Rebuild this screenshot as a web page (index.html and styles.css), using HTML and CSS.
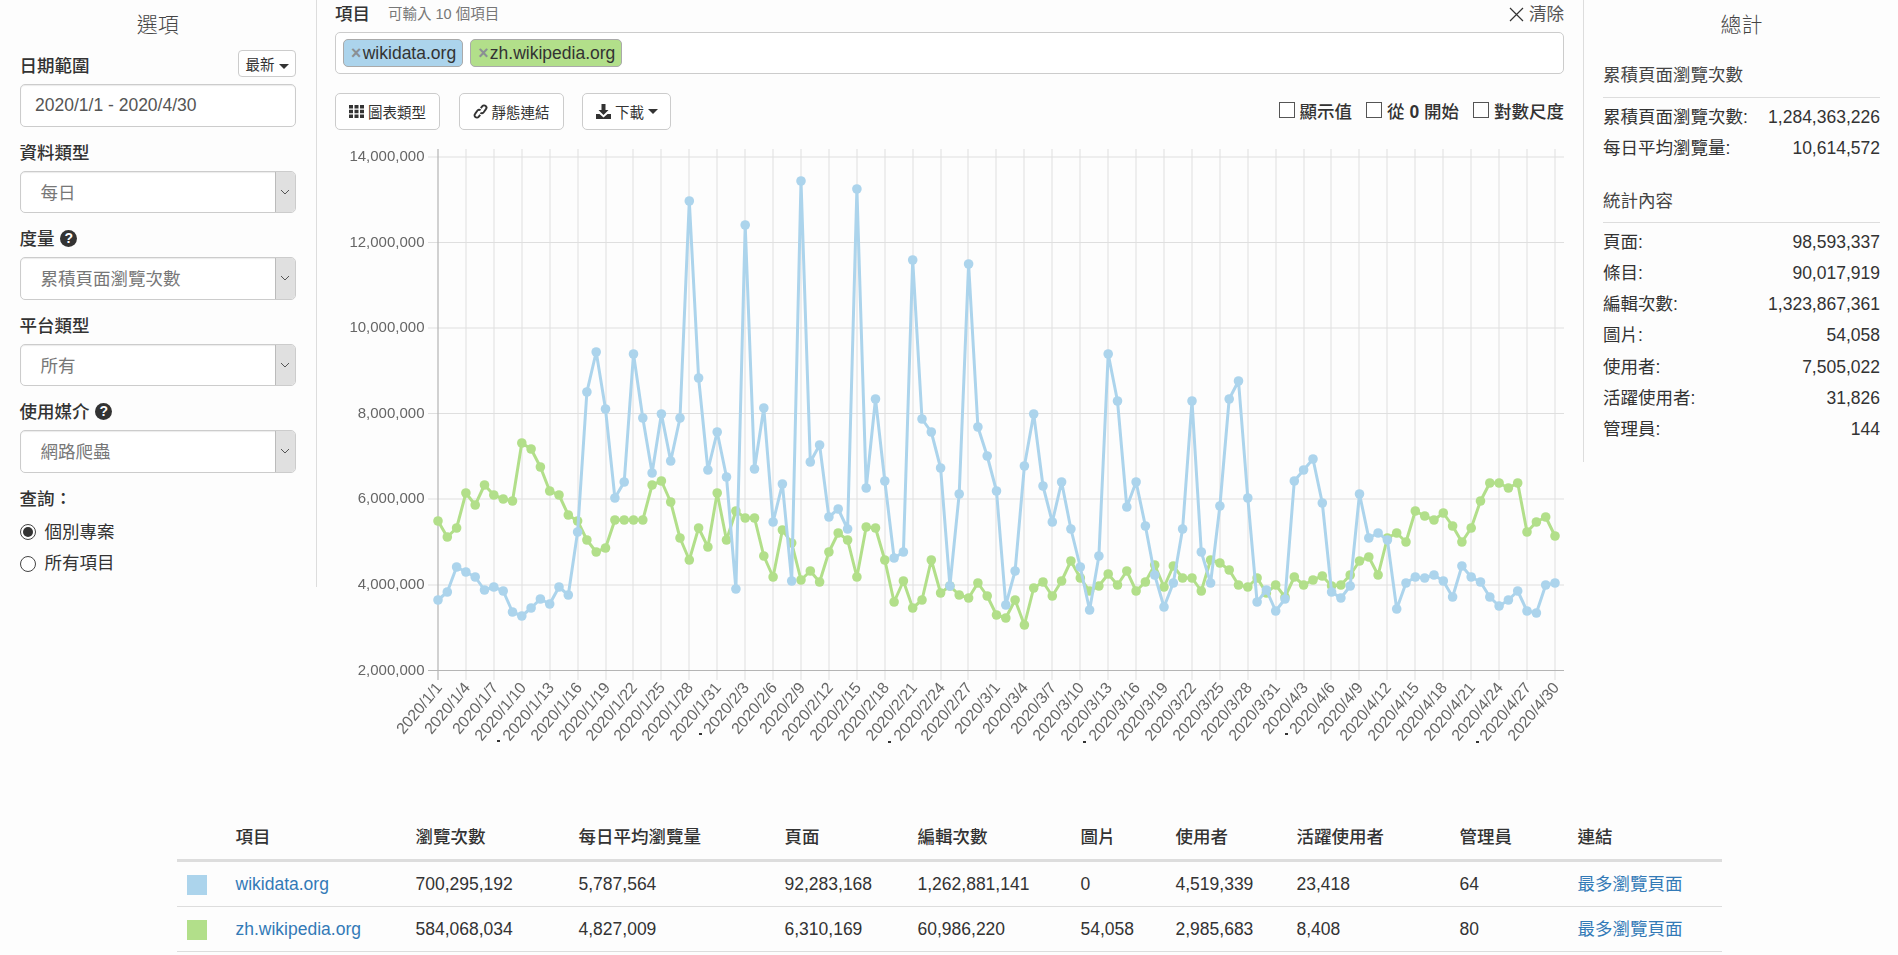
FILE: index.html
```html
<!DOCTYPE html>
<html lang="zh-Hant">
<head>
<meta charset="utf-8">
<title>Siteviews</title>
<link rel="stylesheet" href="styles.css">
</head>
<body>
<main class="main">
  <aside class="options">
    <h2 class="panel-title">選項</h2>
    <div class="date-row">
      <label class="field-label">日期範圍</label>
      <button class="latest">最新<span class="caret"></span></button>
    </div>
    <div class="input">2020/1/1 - 2020/4/30</div>
    <label class="field-label">資料類型</label>
    <div class="select"><span class="select-value">每日</span><span class="select-arrow"><svg class="chev" viewBox="0 0 10 6"><path d="M1 1l4 4 4-4"/></svg></span></div>
    <label class="field-label">度量 <span class="help">?</span></label>
    <div class="select"><span class="select-value">累積頁面瀏覽次數</span><span class="select-arrow"><svg class="chev" viewBox="0 0 10 6"><path d="M1 1l4 4 4-4"/></svg></span></div>
    <label class="field-label">平台類型</label>
    <div class="select"><span class="select-value">所有</span><span class="select-arrow"><svg class="chev" viewBox="0 0 10 6"><path d="M1 1l4 4 4-4"/></svg></span></div>
    <label class="field-label">使用媒介 <span class="help">?</span></label>
    <div class="select"><span class="select-value">網路爬蟲</span><span class="select-arrow"><svg class="chev" viewBox="0 0 10 6"><path d="M1 1l4 4 4-4"/></svg></span></div>
    <label class="field-label">查詢：</label>
    <div class="radios">
      <div class="radio-row"><span class="radio radio-on"></span>個別專案</div>
      <div class="radio-row"><span class="radio"></span>所有項目</div>
    </div>
  </aside>

  <section class="center">
    <div class="items-head">
      <strong class="items-title">項目</strong>
      <span class="items-hint">可輸入 10 個項目</span>
      <span class="clear"><svg class="clear-x" viewBox="0 0 15 15"><path d="M1 1l13 13M14 1L1 14"/></svg>清除</span>
    </div>
    <div class="tagbox">
      <span class="tag tag-blue"><span class="tag-x">×</span>wikidata.org</span>
      <span class="tag tag-green"><span class="tag-x">×</span>zh.wikipedia.org</span>
    </div>
    <div class="toolbar">
      <button class="btn"><svg class="icon" viewBox="0 0 15 15"><path d="M0 1h4v3.500H0zM5.500 1h4v3.500h-4zM11 1h4v3.500h-4zM0 5.750h4v3.500H0zM5.500 5.750h4v3.500h-4zM11 5.750h4v3.500h-4zM0 10.500h4V14H0zM5.500 10.500h4V14h-4zM11 10.500h4V14h-4z"/></svg>圖表類型</button>
      <button class="btn"><svg class="icon icon-link" viewBox="0 0 15 15"><path d="M7.200 10.800L5.600 12.800a2.300 2.300 0 0 1-3.500-3L4.300 6.700a2.300 2.300 0 0 1 3.300-.4M7.800 4.200L9.400 2.200a2.300 2.300 0 0 1 3.500 3L10.700 8.300a2.300 2.300 0 0 1-3.300.4"/></svg>靜態連結</button>
      <button class="btn btn-download"><svg class="icon" viewBox="0 0 15 15"><path d="M5.500 0h4v6h3L7.500 11 2.500 6h3zM0 10h3.500l4 3.500 4-3.500H15v5H0z"/></svg>下載<span class="caret"></span></button>
      <div class="checks">
        <span class="check"><span class="checkbox"></span>顯示值</span>
        <span class="check"><span class="checkbox"></span>從 <b class="zero">0</b> 開始</span>
        <span class="check"><span class="checkbox"></span>對數尺度</span>
      </div>
    </div>

    <svg class="chart" width="1235" height="620" viewBox="335 140 1235 620">
      <defs>
        <marker id="dot-blue" viewBox="-6 -6 12 12" markerWidth="12" markerHeight="12" markerUnits="userSpaceOnUse"><circle class="dot-blue" r="4.800"/></marker>
        <marker id="dot-green" viewBox="-6 -6 12 12" markerWidth="12" markerHeight="12" markerUnits="userSpaceOnUse"><circle class="dot-green" r="4.800"/></marker>
      </defs>
      <path class="grid" d="M466 149V680M494 149V680M522 149V680M550 149V680M578 149V680M606 149V680M633 149V680M661 149V680M689 149V680M717 149V680M745 149V680M773 149V680M801 149V680M829 149V680M857 149V680M885 149V680M913 149V680M941 149V680M968 149V680M996 149V680M1024 149V680M1052 149V680M1080 149V680M1108 149V680M1136 149V680M1164 149V680M1192 149V680M1220 149V680M1248 149V680M1276 149V680M1304 149V680M1331 149V680M1359 149V680M1387 149V680M1415 149V680M1443 149V680M1471 149V680M1499 149V680M1527 149V680M1555 149V680"/>
      <path class="grid" d="M428 157H1564M428 242.500H1564M428 328H1564M428 413.500H1564M428 499H1564M428 585H1564"/>
      <path class="axis" d="M438 149V680M428 670.500H1564"/>
      <g class="y-labels">
        <text x="424.500" y="161">14,000,000</text>
        <text x="424.500" y="246.500">12,000,000</text>
        <text x="424.500" y="332">10,000,000</text>
        <text x="424.500" y="417.500">8,000,000</text>
        <text x="424.500" y="503">6,000,000</text>
        <text x="424.500" y="589">4,000,000</text>
        <text x="424.500" y="674.500">2,000,000</text>
      </g>
      <polyline class="line-green" points="438,521 447.300,537 456.600,528 465.900,493 475.200,505 484.500,485 493.800,495 503.200,499 512.500,501 521.800,443 531.100,449 540.400,467 549.700,491 559,495 568.300,515 577.600,521 586.900,540 596.200,552 605.500,548 614.900,520 624.200,520 633.500,520 642.800,520 652.100,485 661.400,481 670.700,502 680,538 689.300,560 698.600,528 707.900,547 717.200,493 726.500,540 735.900,511 745.200,518 754.500,518 763.800,556 773.100,577 782.400,530 791.700,543 801,580 810.300,571 819.600,582 828.900,552 838.200,533 847.600,540 856.900,577 866.200,527 875.500,528 884.800,560 894.100,602 903.400,581 912.700,608 922,600 931.300,560 940.600,593 949.900,586 959.200,595 968.600,598 977.900,583 987.200,596 996.500,615 1005.800,618 1015.100,600 1024.400,625 1033.700,588 1043,582 1052.300,596 1061.600,581 1070.900,561 1080.300,578 1089.600,591 1098.900,586 1108.200,574 1117.500,585 1126.800,571 1136.100,591 1145.400,582 1154.700,565 1164,587 1173.300,566 1182.600,578 1192,578 1201.300,591 1210.600,560 1219.900,563 1229.200,570 1238.500,585 1247.800,587 1257.100,578 1266.400,593 1275.700,585 1285,597 1294.300,577 1303.600,585 1313,580 1322.300,576 1331.600,586 1340.900,585 1350.200,575 1359.500,561 1368.800,557 1378.100,575 1387.400,538 1396.700,533 1406,542 1415.300,511 1424.700,516 1434,520 1443.300,513 1452.600,526 1461.900,542 1471.200,528 1480.500,501 1489.800,483 1499.100,483 1508.400,488 1517.700,483 1527,532 1536.400,522 1545.700,517 1555,536"/>
      <polyline class="line-blue" points="438,600 447.300,592 456.600,567 465.900,572 475.200,577 484.500,590 493.800,587 503.200,591 512.500,612 521.800,616 531.100,608 540.400,599 549.700,604 559,587 568.300,595 577.600,532 586.900,392 596.200,352 605.500,409 614.900,498 624.200,482 633.500,354 642.800,418 652.100,473 661.400,414 670.700,461 680,418 689.300,201 698.600,378 707.900,470 717.200,432 726.500,477 735.900,589 745.200,225 754.500,469 763.800,408 773.100,522 782.400,484 791.700,581 801,181 810.300,462 819.600,445 828.900,517 838.200,509 847.600,529 856.900,189 866.200,488 875.500,399 884.800,481 894.100,558 903.400,552 912.700,260 922,419 931.300,432 940.600,468 949.900,586 959.200,494 968.600,264 977.900,427 987.200,456 996.500,491 1005.800,605 1015.100,571 1024.400,466 1033.700,414 1043,486 1052.300,522 1061.600,482 1070.900,529 1080.300,567 1089.600,610 1098.900,556 1108.200,354 1117.500,401 1126.800,507 1136.100,482 1145.400,526 1154.700,575 1164,607 1173.300,583 1182.600,529 1192,401 1201.300,552 1210.600,583 1219.900,506 1229.200,399 1238.500,381 1247.800,498 1257.100,602 1266.400,590 1275.700,611 1285,599 1294.300,481 1303.600,470 1313,459 1322.300,503 1331.600,592 1340.900,598 1350.200,586 1359.500,494 1368.800,538 1378.100,533 1387.400,540 1396.700,609 1406,583 1415.300,577 1424.700,578 1434,575 1443.300,581 1452.600,597 1461.900,566 1471.200,577 1480.500,582 1489.800,597 1499.100,606 1508.400,600 1517.700,591 1527,611 1536.400,613 1545.700,585 1555,583"/>
      <g class="x-labels">
        <text x="443" y="688" transform="rotate(-50 443 688)">2020/1/1</text>
        <text x="471" y="688" transform="rotate(-50 471 688)">2020/1/4</text>
        <text x="499" y="688" transform="rotate(-50 499 688)">2020/1/7</text>
        <text x="527" y="688" transform="rotate(-50 527 688)">2020/1/10</text>
        <text x="555" y="688" transform="rotate(-50 555 688)">2020/1/13</text>
        <text x="583" y="688" transform="rotate(-50 583 688)">2020/1/16</text>
        <text x="611" y="688" transform="rotate(-50 611 688)">2020/1/19</text>
        <text x="638" y="688" transform="rotate(-50 638 688)">2020/1/22</text>
        <text x="666" y="688" transform="rotate(-50 666 688)">2020/1/25</text>
        <text x="694" y="688" transform="rotate(-50 694 688)">2020/1/28</text>
        <text x="722" y="688" transform="rotate(-50 722 688)">2020/1/31</text>
        <text x="750" y="688" transform="rotate(-50 750 688)">2020/2/3</text>
        <text x="778" y="688" transform="rotate(-50 778 688)">2020/2/6</text>
        <text x="806" y="688" transform="rotate(-50 806 688)">2020/2/9</text>
        <text x="834" y="688" transform="rotate(-50 834 688)">2020/2/12</text>
        <text x="862" y="688" transform="rotate(-50 862 688)">2020/2/15</text>
        <text x="890" y="688" transform="rotate(-50 890 688)">2020/2/18</text>
        <text x="918" y="688" transform="rotate(-50 918 688)">2020/2/21</text>
        <text x="946" y="688" transform="rotate(-50 946 688)">2020/2/24</text>
        <text x="973" y="688" transform="rotate(-50 973 688)">2020/2/27</text>
        <text x="1001" y="688" transform="rotate(-50 1001 688)">2020/3/1</text>
        <text x="1029" y="688" transform="rotate(-50 1029 688)">2020/3/4</text>
        <text x="1057" y="688" transform="rotate(-50 1057 688)">2020/3/7</text>
        <text x="1085" y="688" transform="rotate(-50 1085 688)">2020/3/10</text>
        <text x="1113" y="688" transform="rotate(-50 1113 688)">2020/3/13</text>
        <text x="1141" y="688" transform="rotate(-50 1141 688)">2020/3/16</text>
        <text x="1169" y="688" transform="rotate(-50 1169 688)">2020/3/19</text>
        <text x="1197" y="688" transform="rotate(-50 1197 688)">2020/3/22</text>
        <text x="1225" y="688" transform="rotate(-50 1225 688)">2020/3/25</text>
        <text x="1253" y="688" transform="rotate(-50 1253 688)">2020/3/28</text>
        <text x="1281" y="688" transform="rotate(-50 1281 688)">2020/3/31</text>
        <text x="1309" y="688" transform="rotate(-50 1309 688)">2020/4/3</text>
        <text x="1336" y="688" transform="rotate(-50 1336 688)">2020/4/6</text>
        <text x="1364" y="688" transform="rotate(-50 1364 688)">2020/4/9</text>
        <text x="1392" y="688" transform="rotate(-50 1392 688)">2020/4/12</text>
        <text x="1420" y="688" transform="rotate(-50 1420 688)">2020/4/15</text>
        <text x="1448" y="688" transform="rotate(-50 1448 688)">2020/4/18</text>
        <text x="1476" y="688" transform="rotate(-50 1476 688)">2020/4/21</text>
        <text x="1504" y="688" transform="rotate(-50 1504 688)">2020/4/24</text>
        <text x="1532" y="688" transform="rotate(-50 1532 688)">2020/4/27</text>
        <text x="1560" y="688" transform="rotate(-50 1560 688)">2020/4/30</text>
      </g>
      <path class="specks" d="M497 740h3v2h-3zM699 733h3v2h-3zM888 741h3v2h-3zM1083 741h3v2h-3zM1285 733h3v2h-3zM1476 741h3v2h-3z"/>
    </svg>
  </section>

  <aside class="totals">
    <h2 class="panel-title">總計</h2>
    <div class="section-title">累積頁面瀏覽次數</div>
    <div class="stat-list">
      <div class="stat"><span>累積頁面瀏覽次數:</span><span>1,284,363,226</span></div>
      <div class="stat"><span>每日平均瀏覽量:</span><span>10,614,572</span></div>
    </div>
    <div class="section-title section-second">統計內容</div>
    <div class="stat-list">
      <div class="stat"><span>頁面:</span><span>98,593,337</span></div>
      <div class="stat"><span>條目:</span><span>90,017,919</span></div>
      <div class="stat"><span>編輯次數:</span><span>1,323,867,361</span></div>
      <div class="stat"><span>圖片:</span><span>54,058</span></div>
      <div class="stat"><span>使用者:</span><span>7,505,022</span></div>
      <div class="stat"><span>活躍使用者:</span><span>31,826</span></div>
      <div class="stat"><span>管理員:</span><span>144</span></div>
    </div>
  </aside>
</main>

<table class="table">
  <colgroup>
    <col class="c-swatch"><col class="c-item"><col class="c-views"><col class="c-avg"><col class="c-pages"><col class="c-edits"><col class="c-images"><col class="c-users"><col class="c-active"><col class="c-admins"><col class="c-links">
  </colgroup>
  <thead>
    <tr><th></th><th>項目</th><th>瀏覽次數</th><th>每日平均瀏覽量</th><th>頁面</th><th>編輯次數</th><th>圖片</th><th>使用者</th><th>活躍使用者</th><th>管理員</th><th>連結</th></tr>
  </thead>
  <tbody>
    <tr><td><span class="swatch swatch-blue"></span></td><td><a href="#">wikidata.org</a></td><td>700,295,192</td><td>5,787,564</td><td>92,283,168</td><td>1,262,881,141</td><td>0</td><td>4,519,339</td><td>23,418</td><td>64</td><td><a href="#">最多瀏覽頁面</a></td></tr>
    <tr><td><span class="swatch swatch-green"></span></td><td><a href="#">zh.wikipedia.org</a></td><td>584,068,034</td><td>4,827,009</td><td>6,310,169</td><td>60,986,220</td><td>54,058</td><td>2,985,683</td><td>8,408</td><td>80</td><td><a href="#">最多瀏覽頁面</a></td></tr>
  </tbody>
</table>
</body>
</html>
```

FILE: styles.css
```css
* { box-sizing: border-box; }
html, body { margin: 0; padding: 0; background: #fdfdfd; }
body {
  font-family: "Liberation Sans", "Noto Sans CJK TC", sans-serif;
  font-size: 17.5px;
  line-height: 25px;
  color: #333;
  overflow: hidden;
}
button { font-family: inherit; color: #333; cursor: pointer; }

.main { display: flex; align-items: flex-start; }

.options {
  width: 317px;
  height: 587px;
  flex: none;
  padding: 0 20px 0 19.5px;
  border-right: 1px solid #ddd;
}
.panel-title {
  margin: 0;
  height: 50px;
  font-size: 21px;
  font-weight: 300;
  line-height: 50px;
  text-align: center;
  color: #444;
}
.date-row { display: flex; justify-content: space-between; align-items: flex-start; height: 29px; margin-bottom: 5px; }
.date-row .field-label { margin: 4px 0 0; }
.field-label { display: block; margin-bottom: 5px; font-weight: 500; }
.latest {
  height: 27px;
  width: 58px;
  padding: 0;
  font-size: 14.5px;
  background: #fff;
  border: 1px solid #ccc;
  border-radius: 4px;
}
.caret {
  display: inline-block;
  margin-left: 4px;
  vertical-align: middle;
  border-top: 5px solid #333;
  border-left: 5px solid transparent;
  border-right: 5px solid transparent;
}
.input, .select {
  height: 42.5px;
  margin-bottom: 14px;
  background: #fff;
  border: 1px solid #ccc;
  border-radius: 5px;
  box-shadow: inset 0 1px 1px rgba(0,0,0,.08);
}
.input { padding: 8px 14.5px; color: #555; }
.select { display: flex; justify-content: space-between; color: #777; }
.select-value { padding: 9px 0 0 20px; }
.select-arrow {
  display: flex;
  align-items: center;
  justify-content: center;
  width: 20.5px;
  background: #e0e0e0;
  border-left: 1px solid #bbb;
  border-radius: 0 4px 4px 0;
}
.chev { width: 10px; height: 6px; fill: none; stroke: #555; stroke-width: 1; }
.help {
  display: inline-block;
  width: 17px;
  height: 17px;
  margin-left: 1px;
  border-radius: 50%;
  background: #333;
  color: #fdfdfd;
  font-size: 14px;
  font-weight: 700;
  line-height: 17px;
  text-align: center;
  vertical-align: 2px;
}
.radios { margin-top: 3px; }
.radio-row { display: flex; align-items: center; height: 31.5px; }
.radio {
  display: flex;
  align-items: center;
  justify-content: center;
  width: 16px;
  height: 16px;
  margin-right: 9px;
  background: #fff;
  border: 1px solid #444;
  border-radius: 50%;
}
.radio-on::after { content: ""; width: 10px; height: 10px; border-radius: 50%; background: #333; }

.center { flex: 1; min-width: 0; margin: 0 19px 0 18px; }
.items-head { display: flex; align-items: center; height: 28px; margin-bottom: 4px; }
.items-title { font-weight: 500; }
.items-hint { margin-left: 18px; font-size: 14.5px; color: #777; }
.clear { display: flex; align-items: center; margin-left: auto; color: #555; }
.clear-x { width: 15px; height: 15px; margin-right: 5px; fill: none; stroke: #333; stroke-width: 1.2; }
.tagbox {
  display: flex;
  gap: 7px;
  align-items: center;
  height: 42px;
  padding: 0 7px;
  background: #fff;
  border: 1px solid #ccc;
  border-radius: 5px;
}
.tag {
  height: 28px;
  padding: 0 6px 0 7px;
  line-height: 26px;
  border: 1px solid #aaa;
  border-radius: 5px;
}
.tag-blue { background: #acd4ec; }
.tag-green { background: #b2df8a; }
.tag-x { margin-right: 1.5px; color: #8a8f94; font-weight: 700; }

.toolbar { display: flex; align-items: flex-start; gap: 18.5px; height: 37px; margin-top: 19px; }
.btn {
  display: flex;
  align-items: center;
  height: 37px;
  padding: 0 13px;
  font-size: 14.5px;
  background: #fff;
  border: 1px solid #ccc;
  border-radius: 5px;
}
.btn-download { padding-right: 12px; }
.icon { width: 15px; height: 15px; margin-right: 4px; fill: #333; }
.icon-link { fill: none; stroke: #333; stroke-width: 1.9; }
.checks { display: flex; gap: 14px; margin-left: auto; margin-top: 7px; }
.check { display: flex; align-items: center; font-weight: 500; white-space: pre; }
.zero { font-weight: 700; }
.checkbox { width: 16px; height: 16px; margin: 0 5px 5px 0; background: #fff; border: 1px solid #555; }

.chart { display: block; margin-top: 10px; filter: blur(.35px); }
.grid { fill: none; stroke: #dfdfdf; stroke-width: 1; }
.axis { fill: none; stroke: #b5b5b5; stroke-width: 1.2; }
.y-labels { font-size: 15px; fill: #666; }
.x-labels { font-size: 15.8px; fill: #666; }
.y-labels text, .x-labels text { text-anchor: end; }
.line-blue, .line-green { fill: none; stroke-width: 3; stroke-linejoin: round; }
.line-blue { stroke: #acd4ec; marker: url(#dot-blue); }
.line-green { stroke: #b2df8a; marker: url(#dot-green); }
.dot-blue { fill: #acd4ec; }
.dot-green { fill: #b2df8a; }
.specks { fill: #333; }

.totals {
  width: 315px;
  height: 462px;
  flex: none;
  padding: 0 18px 0 19px;
  border-left: 1px solid #ddd;
}
.section-title {
  margin-top: 12.5px;
  padding-bottom: 9px;
  border-bottom: 1px solid #ddd;
  color: #444;
}
.section-second { margin-top: 25px; padding-bottom: 8px; }
.stat-list { padding-top: 4px; }
.stat { display: flex; justify-content: space-between; height: 31.2px; line-height: 31.2px; }

.table {
  width: 1545px;
  margin: 54px auto 0;
  table-layout: fixed;
  border-collapse: separate;
  border-spacing: 0;
}
.c-swatch { width: 49px; }
.c-item { width: 180px; }
.c-views { width: 163px; }
.c-avg { width: 206px; }
.c-pages { width: 133px; }
.c-edits { width: 163px; }
.c-images { width: 95px; }
.c-users { width: 121px; }
.c-active { width: 163px; }
.c-admins { width: 118px; }
.c-links { width: 154px; }
.table th {
  height: 48px;
  padding: 2px 10px 0;
  text-align: left;
  font-weight: 500;
  border-bottom: 3px solid #ddd;
}
.table td { height: 45px; padding: 1px 10px 0; border-bottom: 1px solid #ddd; }
.table a { color: #337ab7; text-decoration: none; }
.swatch { display: block; width: 20px; height: 20px; }
.swatch-blue { background: #acd4ec; }
.swatch-green { background: #b2df8a; }
```
